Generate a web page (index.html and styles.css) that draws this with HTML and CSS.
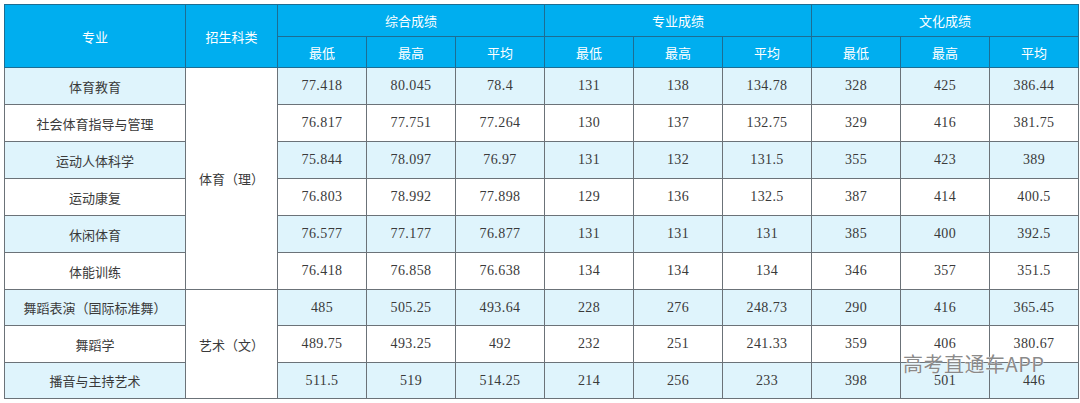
FILE: index.html
```html
<!DOCTYPE html>
<html lang="zh">
<head>
<meta charset="utf-8">
<title>录取分数</title>
<link rel="stylesheet" href="styles.css">
</head>
<body>
<div class="page">
  <table class="scores">
    <colgroup>
      <col class="c-major"><col class="c-cat">
      <col class="c-num"><col class="c-num"><col class="c-num">
      <col class="c-num"><col class="c-num"><col class="c-num">
      <col class="c-num"><col class="c-num"><col class="c-num">
    </colgroup>
    <thead>
      <tr class="h1">
        <th rowspan="2">专业</th>
        <th rowspan="2">招生科类</th>
        <th colspan="3">综合成绩</th>
        <th colspan="3">专业成绩</th>
        <th colspan="3">文化成绩</th>
      </tr>
      <tr class="h2">
        <th>最低</th><th>最高</th><th>平均</th>
        <th>最低</th><th>最高</th><th>平均</th>
        <th>最低</th><th>最高</th><th>平均</th>
      </tr>
    </thead>
    <tbody>
      <tr class="alt">
        <td class="cn">体育教育</td>
        <td class="cn cat" rowspan="6">体育（理）</td>
        <td>77.418</td><td>80.045</td><td>78.4</td>
        <td>131</td><td>138</td><td>134.78</td>
        <td>328</td><td>425</td><td>386.44</td>
      </tr>
      <tr>
        <td class="cn">社会体育指导与管理</td>
        <td>76.817</td><td>77.751</td><td>77.264</td>
        <td>130</td><td>137</td><td>132.75</td>
        <td>329</td><td>416</td><td>381.75</td>
      </tr>
      <tr class="alt">
        <td class="cn">运动人体科学</td>
        <td>75.844</td><td>78.097</td><td>76.97</td>
        <td>131</td><td>132</td><td>131.5</td>
        <td>355</td><td>423</td><td>389</td>
      </tr>
      <tr>
        <td class="cn">运动康复</td>
        <td>76.803</td><td>78.992</td><td>77.898</td>
        <td>129</td><td>136</td><td>132.5</td>
        <td>387</td><td>414</td><td>400.5</td>
      </tr>
      <tr class="alt">
        <td class="cn">休闲体育</td>
        <td>76.577</td><td>77.177</td><td>76.877</td>
        <td>131</td><td>131</td><td>131</td>
        <td>385</td><td>400</td><td>392.5</td>
      </tr>
      <tr>
        <td class="cn">体能训练</td>
        <td>76.418</td><td>76.858</td><td>76.638</td>
        <td>134</td><td>134</td><td>134</td>
        <td>346</td><td>357</td><td>351.5</td>
      </tr>
      <tr class="alt short">
        <td class="cn">舞蹈表演（国际标准舞）</td>
        <td class="cn cat" rowspan="3">艺术（文）</td>
        <td>485</td><td>505.25</td><td>493.64</td>
        <td>228</td><td>276</td><td>248.73</td>
        <td>290</td><td>416</td><td>365.45</td>
      </tr>
      <tr>
        <td class="cn">舞蹈学</td>
        <td>489.75</td><td>493.25</td><td>492</td>
        <td>232</td><td>251</td><td>241.33</td>
        <td>359</td><td>406</td><td>380.67</td>
      </tr>
      <tr class="alt short">
        <td class="cn">播音与主持艺术</td>
        <td>511.5</td><td>519</td><td>514.25</td>
        <td>214</td><td>256</td><td>233</td>
        <td>398</td><td>501</td><td>446</td>
      </tr>
    </tbody>
  </table>
  <div class="watermark">高考直通车APP</div>
</div>
</body>
</html>
```

FILE: styles.css
```css
html, body {
  margin: 0;
  padding: 0;
  background: #ffffff;
}

.page {
  position: relative;
  width: 1080px;
  height: 403px;
  padding: 4px 0 0 4px;
  box-sizing: border-box;
}

.scores {
  width: 1071px;
  table-layout: fixed;
  border-collapse: collapse;
  border: 1px solid #2f5f78;
  font-family: "Noto Sans CJK SC", sans-serif;
  font-size: 13px;
  color: #3a3a3a;
}

.c-major { width: 181px; }
.c-cat { width: 92px; }
.c-num { width: 89px; }

.scores th {
  background: #00aeef;
  color: #ffffff;
  font-weight: normal;
  border: 1px solid #1d6d93;
  padding: 0;
  text-align: center;
  vertical-align: middle;
}

.h1 { height: 32px; }
.h2 { height: 31px; }

.scores td {
  height: 36px;
  padding: 0;
  text-align: center;
  vertical-align: middle;
  border: 1px solid #6b7278;
  font-family: "Liberation Serif", "Noto Sans CJK SC", serif;
  font-size: 14px;
  letter-spacing: 0.4px;
}

.scores tr.short td {
  height: 35px;
}

.scores td.cn {
  font-family: "Noto Sans CJK SC", sans-serif;
  font-size: 13px;
  letter-spacing: 0;
}

.scores tr.alt td {
  background: #dff4fc;
}

.scores td.cat {
  background: #ffffff;
}

.scores tr.alt td.cat {
  background: #ffffff;
}

.watermark {
  position: absolute;
  left: 903px;
  top: 349px;
  font-family: "Noto Sans CJK SC", "Noto Sans", sans-serif;
  font-size: 20px;
  color: #8a8a8a;
  letter-spacing: 0.5px;
  text-shadow: 0 0 1px #ffffff, 0 0 1px #ffffff;
}
```
